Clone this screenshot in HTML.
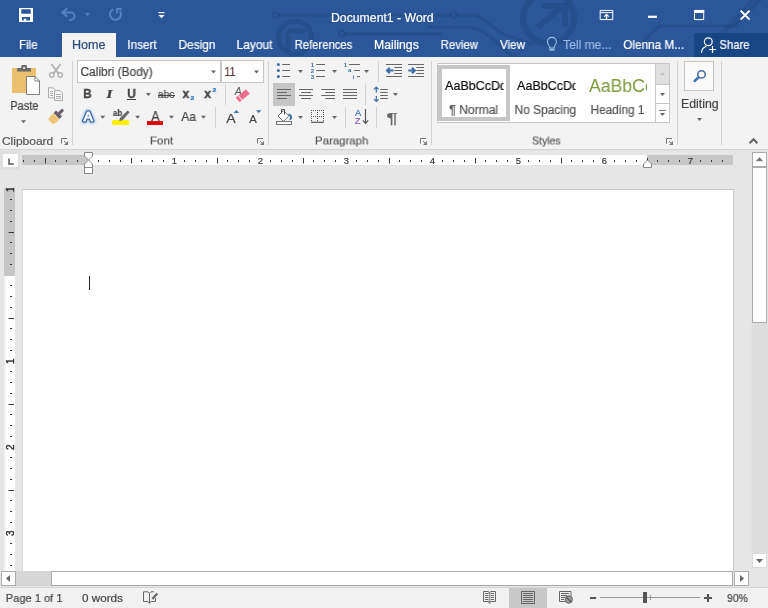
<!DOCTYPE html>
<html lang="en"><head><meta charset="utf-8"><title>Document1 - Word</title>
<style>
html,body{margin:0;padding:0;}
body{width:768px;height:608px;overflow:hidden;position:relative;background:#e6e6e6;font-family:"Liberation Sans",sans-serif;}
.t{position:absolute;white-space:nowrap;transform-origin:0 50%;will-change:transform;line-height:20px;-webkit-text-stroke:0.2px currentColor;}
.r{position:absolute;box-sizing:border-box;}
svg.ov{position:absolute;left:0;top:0;width:768px;height:608px;}
</style></head><body>
<div class="r" style="left:0px;top:0px;width:768px;height:57px;background:#2b579a;"></div>
<svg class="ov" viewBox="0 0 768 608" width="768" height="608"><g fill="none" stroke="#1d427c" stroke-opacity="0.42" stroke-linecap="round"><circle cx="275.5" cy="15.3" r="3" stroke-width="2"/><path d="M279 15.3H450" stroke-width="3"/><circle cx="453.5" cy="15.3" r="3" stroke-width="2"/><path d="M457 15.3H477L503 34L532 44" stroke-width="3"/><circle cx="342" cy="33.8" r="3" stroke-width="2"/><path d="M345.500 33.8H440" stroke-width="3"/><path d="M430 27H468Q482 28 496 42L512 56" stroke-width="3"/><circle cx="295" cy="37.5" r="16.500" stroke-width="5"/><path d="M288 50V34Q288 31 291 31H304" stroke-width="4.500"/><circle cx="548.5" cy="18" r="25.5" stroke-width="6.5"/><path d="M538 27L563 6M542 6H565V27" stroke-width="6" stroke-linecap="butt"/><path d="M640 45L659 26H735L762 -2" stroke-width="3"/><path d="M700 57L756 -2" stroke-width="6" stroke-opacity="0.3"/></g></svg>
<div class="r" style="left:0px;top:57px;width:768px;height:93px;background:#f3f3f3;border-bottom:1px solid #d2d2d2;"></div>
<div class="r" style="left:62px;top:33px;width:54px;height:25px;background:#f3f3f3;"></div>
<div class="r" style="left:694px;top:33px;width:74px;height:24px;background:#184684;"></div>
<span class="t" style="left:331px;top:7px;font-size:12.2px;color:#fff;padding-left:0.02px;transform:translateY(0.50px) scaleX(1.0053);">Document1 - Word</span>
<span class="t" style="left:18px;top:35px;font-size:12.2px;color:#fff;padding-left:0.89px;transform:scaleX(0.9627);">File</span>
<span class="t" style="left:71px;top:35px;font-size:12.2px;color:#2b4a7f;padding-left:0.96px;transform:scaleX(1.0306);">Home</span>
<span class="t" style="left:127px;top:35px;font-size:12.2px;color:#fff;padding-left:0.25px;transform:scaleX(0.9659);">Insert</span>
<span class="t" style="left:178px;top:35px;font-size:12.2px;color:#fff;padding-left:0.57px;transform:scaleX(0.9715);">Design</span>
<span class="t" style="left:236px;top:35px;font-size:12.2px;color:#fff;padding-left:0.55px;transform:scaleX(0.9825);">Layout</span>
<span class="t" style="left:294px;top:35px;font-size:12.2px;color:#fff;padding-left:0.64px;transform:scaleX(0.9262);">References</span>
<span class="t" style="left:374px;top:35px;font-size:12.2px;color:#fff;padding-left:0.02px;">Mailings</span>
<span class="t" style="left:440px;top:35px;font-size:12.2px;color:#fff;padding-left:0.85px;transform:scaleX(0.9298);">Review</span>
<span class="t" style="left:500px;top:35px;font-size:12.2px;color:#fff;transform:scaleX(0.9531);">View</span>
<span class="t" style="left:563px;top:35px;font-size:12.2px;color:#9bb8e6;padding-left:0.06px;transform:scaleX(0.9912);">Tell me...</span>
<span class="t" style="left:623px;top:35px;font-size:12.2px;color:#fff;padding-left:0.28px;transform:scaleX(0.9637);">Olenna M...</span>
<span class="t" style="left:719px;top:35px;font-size:12.2px;color:#fff;padding-left:0.54px;transform:scaleX(0.9213);">Share</span>
<span class="t" style="left:1px;top:130px;font-size:11.5px;color:#555;padding-left:0.86px;transform:translateY(0.50px) scaleX(1.0426);">Clipboard</span>
<span class="t" style="left:150px;top:130px;font-size:11.5px;color:#555;padding-left:0.08px;transform:translateY(0.50px) scaleX(0.9964);">Font</span>
<span class="t" style="left:315px;top:130px;font-size:11.5px;color:#555;padding-left:0.09px;transform:translateY(0.50px) scaleX(0.9905);">Paragraph</span>
<span class="t" style="left:532px;top:130px;font-size:11.5px;color:#555;padding-left:0.03px;transform:translateY(0.50px) scaleX(0.9139);">Styles</span>
<span class="t" style="left:10px;top:96px;font-size:12.3px;color:#444444;padding-left:0.13px;transform:scaleX(0.9015);">Paste</span>
<span class="t" style="left:681px;top:94px;font-size:12.3px;color:#444444;padding-left:0.02px;transform:scaleX(0.9929);">Editing</span>
<div class="r" style="left:72px;top:61px;width:1px;height:84px;background:#d2d2d2;"></div>
<div class="r" style="left:268px;top:61px;width:1px;height:84px;background:#d2d2d2;"></div>
<div class="r" style="left:431px;top:61px;width:1px;height:84px;background:#d2d2d2;"></div>
<div class="r" style="left:677px;top:61px;width:1px;height:84px;background:#d2d2d2;"></div>
<div class="r" style="left:721px;top:61px;width:1px;height:84px;background:#d2d2d2;"></div>
<div class="r" style="left:225px;top:84px;width:1px;height:21px;background:#d2d2d2;"></div>
<div class="r" style="left:215px;top:107px;width:1px;height:21px;background:#d2d2d2;"></div>
<div class="r" style="left:378px;top:61px;width:1px;height:21px;background:#d2d2d2;"></div>
<div class="r" style="left:365px;top:84px;width:1px;height:21px;background:#d2d2d2;"></div>
<div class="r" style="left:345px;top:107px;width:1px;height:21px;background:#d2d2d2;"></div>
<div class="r" style="left:376px;top:107px;width:1px;height:21px;background:#d2d2d2;"></div>
<div class="r" style="left:77px;top:60px;width:144px;height:23px;background:#fff;border:1px solid #c6c6c6;"></div>
<div class="r" style="left:221px;top:60px;width:43px;height:23px;background:#fff;border:1px solid #c6c6c6;"></div>
<span class="t" style="left:80px;top:62px;font-size:12px;color:#444444;padding-left:0.41px;transform:scaleX(0.9944);">Calibri (Body)</span>
<span class="t" style="left:224px;top:62px;font-size:12px;color:#5a3a3a;padding-left:0.20px;transform:scaleX(0.9107);">11</span>
<span class="t" style="left:83px;top:84px;font-size:12.2px;color:#444444;padding-left:0.16px;transform:scaleX(0.9463);font-weight:bold;-webkit-text-stroke:0.35px currentColor;">B</span>
<span class="t" style="left:106px;top:84px;font-size:13px;color:#444444;padding-left:0.13px;transform:scaleX(1.2522);font-weight:bold;font-style:italic;font-family:'Liberation Serif',serif;">I</span>
<span class="t" style="left:127px;top:84px;font-size:12.2px;color:#444444;padding-left:0.19px;transform:scaleX(0.9755);font-weight:bold;-webkit-text-stroke:0.35px currentColor;">U</span>
<div class="r" style="left:127px;top:99px;width:9px;height:1px;background:#444444;"></div>
<span class="t" style="left:157px;top:84px;font-size:11px;color:#444444;padding-left:0.83px;transform:scaleX(0.9415);">abc</span>
<div class="r" style="left:157.5px;top:94.7px;width:17.2px;height:1px;background:#444444;"></div>
<span class="t" style="left:182px;top:84px;font-size:13px;color:#444444;padding-left:0.47px;transform:scaleX(0.9315);font-weight:bold;-webkit-text-stroke:0.4px currentColor;">x</span>
<span class="t" style="left:190px;top:88px;font-size:5.5px;color:#2e75b6;padding-left:0.47px;transform:scaleX(1.2616);font-weight:bold;">2</span>
<span class="t" style="left:204px;top:84px;font-size:13px;color:#444444;padding-left:0.36px;transform:scaleX(0.9315);font-weight:bold;-webkit-text-stroke:0.4px currentColor;">x</span>
<span class="t" style="left:212px;top:80px;font-size:5.5px;color:#2e75b6;padding-left:0.47px;transform:scaleX(1.2616);font-weight:bold;">2</span>
<span class="t" style="left:112px;top:103px;font-size:9.4px;color:#444444;padding-left:0.94px;transform:scaleX(0.8511);font-weight:bold;">ab</span>
<div class="r" style="left:112.3px;top:120.3px;width:17px;height:5px;background:#fff000;border-radius:1.5px;"></div>
<span class="t" style="left:151px;top:106px;font-size:14px;color:#444444;padding-left:0.22px;transform:scaleX(0.9023);">A</span>
<div class="r" style="left:147px;top:121.2px;width:16px;height:3.8px;background:#e5000f;"></div>
<span class="t" style="left:181px;top:107px;font-size:12.4px;color:#444444;padding-left:0.31px;transform:scaleX(0.9677);">Aa</span>
<span class="t" style="left:226px;top:108px;font-size:13.4px;color:#444444;padding-left:0.28px;transform:translateY(0.80px) scaleX(1.0549);">A</span>
<span class="t" style="left:249px;top:108px;font-size:10.7px;color:#444444;padding-left:0.19px;transform:translateY(0.80px) scaleX(1.0540);">A</span>
<div class="r" style="left:273px;top:83px;width:22px;height:23px;background:#c6c6c6;"></div>
<span class="t" style="left:386px;top:107px;font-size:15.5px;color:#666;padding-left:0.17px;transform:translateY(0.80px) scaleX(1.4025);">¶</span>
<span class="t" style="left:355px;top:102px;font-size:9.3px;color:#3b6fb8;transform:translateY(0.80px);">A</span>
<span class="t" style="left:354px;top:110px;font-size:8.4px;color:#8e5cb8;padding-left:0.64px;transform:translateY(0.80px) scaleX(1.1255);">Z</span>
<div class="r" style="left:437px;top:63px;width:233px;height:60px;background:#fff;border:1px solid #c6c6c6;"></div>
<div class="r" style="left:438px;top:65px;width:72px;height:56px;background:#fff;border:4px solid #c6c6c6;"></div>
<div class="r" style="left:655px;top:64px;width:14px;height:20px;background:#e0e0e0;"></div>
<div class="r" style="left:655px;top:84px;width:15px;height:1px;background:#c6c6c6;"></div>
<div class="r" style="left:655px;top:103px;width:15px;height:1px;background:#c6c6c6;"></div>
<div class="r" style="left:655px;top:64px;width:1px;height:58px;background:#c6c6c6;"></div>
<span class="t" style="left:445px;top:76px;font-size:12.6px;color:#0a0a0a;transform:scaleX(0.9937);clip-path:inset(-5px 3.76px -5px -5px);">AaBbCcDd</span>
<span class="t" style="left:517px;top:76px;font-size:12.6px;color:#0a0a0a;transform:scaleX(0.9937);clip-path:inset(-5px 3.76px -5px -5px);">AaBbCcDd</span>
<span class="t" style="left:589px;top:76px;font-size:18px;color:#7c9a3c;transform:scaleX(0.9798);clip-path:inset(-5px 7.04px -5px -5px);-webkit-text-stroke:0;">AaBbCc</span>
<span class="t" style="left:449px;top:100px;font-size:12.3px;color:#555;padding-left:0.18px;transform:scaleX(0.9884);">¶ Normal</span>
<span class="t" style="left:514px;top:100px;font-size:12.3px;color:#555;padding-left:0.56px;transform:scaleX(0.9698);">No Spacing</span>
<span class="t" style="left:590px;top:100px;font-size:12.3px;color:#555;padding-left:0.57px;transform:scaleX(0.9624);">Heading 1</span>
<div class="r" style="left:684px;top:61px;width:30px;height:30px;background:#fafafa;border:1px solid #c6c6c6;"></div>
<div class="r" style="left:0px;top:151px;width:20px;height:19px;background:#dfdfdf;border-radius:0 2px 2px 0;"></div>
<div class="r" style="left:3px;top:154px;width:14.5px;height:13px;background:#fff;"></div>
<div class="r" style="left:22px;top:155px;width:711px;height:10px;background:#c6c6c6;"></div>
<div class="r" style="left:88px;top:155px;width:559px;height:10px;background:#fff;"></div>
<div class="r" style="left:4px;top:188px;width:11px;height:383px;background:#fff;background:linear-gradient(90deg,#ededed 0,#fff 3px);"></div>
<div class="r" style="left:4px;top:188px;width:11px;height:88px;background:#c6c6c6;"></div>
<div class="r" style="left:22px;top:189px;width:712px;height:382px;background:#fff;border:1px solid #c6c6c6;border-bottom:none;border-left-color:#d6d6d6;"></div>
<div class="r" style="left:89px;top:276px;width:1px;height:14px;background:#222;"></div>
<div class="r" style="left:750px;top:323px;width:18px;height:230px;background:#dddddd;background:linear-gradient(90deg,#e6e6e6 0,#dddddd 3px);"></div>
<div class="r" style="left:752px;top:152px;width:15px;height:15px;background:#fff;border:1px solid #ababab;"></div>
<div class="r" style="left:752px;top:167px;width:15px;height:156px;background:#fff;border:1px solid #ababab;"></div>
<div class="r" style="left:752px;top:553px;width:15px;height:15px;background:#fff;border:1px solid #dadada;"></div>
<div class="r" style="left:0px;top:571px;width:750px;height:15px;background:#e6e6e6;"></div>
<div class="r" style="left:16px;top:571px;width:35px;height:15px;background:#d6d6d6;"></div>
<div class="r" style="left:1px;top:571px;width:15px;height:15px;background:#fff;border:1px solid #ababab;"></div>
<div class="r" style="left:51px;top:571px;width:682px;height:15px;background:#fff;border:1px solid #ababab;"></div>
<div class="r" style="left:734px;top:571px;width:15px;height:15px;background:#fff;border:1px solid #ababab;"></div>
<div class="r" style="left:0px;top:587px;width:768px;height:21px;background:#f1f1f1;border-top:1px solid #d4d4d4;"></div>
<div class="r" style="left:509px;top:588px;width:38px;height:20px;background:#c8c8c8;"></div>
<span class="t" style="left:5px;top:588px;font-size:11.5px;color:#444444;padding-left:0.84px;transform:scaleX(0.9637);">Page 1 of 1</span>
<span class="t" style="left:82px;top:588px;font-size:11.5px;color:#444444;padding-left:0.09px;transform:scaleX(1.0141);">0 words</span>
<span class="t" style="left:727px;top:588px;font-size:11.5px;color:#444444;padding-left:0.03px;transform:scaleX(0.9058);">90%</span>
<svg class="ov" viewBox="0 0 768 608" width="768" height="608">
<path d="M211.00 70.50h5l-2.50 3.00z" fill="#666"/>
<path d="M254.00 70.50h5l-2.50 3.00z" fill="#666"/>
<path d="M145.90 93.00h5l-2.50 3.00z" fill="#666"/>
<path d="M100.20 115.80h5l-2.50 3.00z" fill="#666"/>
<path d="M135.10 115.80h5l-2.50 3.00z" fill="#666"/>
<path d="M169.00 115.80h5l-2.50 3.00z" fill="#666"/>
<path d="M201.00 115.80h5l-2.50 3.00z" fill="#666"/>
<rect x="23" y="160" width="1" height="2" fill="#3a3a3a"/>
<rect x="34" y="160" width="1" height="2" fill="#3a3a3a"/>
<rect x="45" y="158" width="1" height="5.5" fill="#3a3a3a"/>
<rect x="55" y="160" width="1" height="2" fill="#3a3a3a"/>
<rect x="66" y="160" width="1" height="2" fill="#3a3a3a"/>
<rect x="77" y="160" width="1" height="2" fill="#3a3a3a"/>
<rect x="98" y="160" width="1" height="2" fill="#3a3a3a"/>
<rect x="109" y="160" width="1" height="2" fill="#3a3a3a"/>
<rect x="120" y="160" width="1" height="2" fill="#3a3a3a"/>
<rect x="131" y="158" width="1" height="5.5" fill="#3a3a3a"/>
<rect x="141" y="160" width="1" height="2" fill="#3a3a3a"/>
<rect x="152" y="160" width="1" height="2" fill="#3a3a3a"/>
<rect x="163" y="160" width="1" height="2" fill="#3a3a3a"/>
<rect x="184" y="160" width="1" height="2" fill="#3a3a3a"/>
<rect x="195" y="160" width="1" height="2" fill="#3a3a3a"/>
<rect x="206" y="160" width="1" height="2" fill="#3a3a3a"/>
<rect x="217" y="158" width="1" height="5.5" fill="#3a3a3a"/>
<rect x="227" y="160" width="1" height="2" fill="#3a3a3a"/>
<rect x="238" y="160" width="1" height="2" fill="#3a3a3a"/>
<rect x="249" y="160" width="1" height="2" fill="#3a3a3a"/>
<rect x="270" y="160" width="1" height="2" fill="#3a3a3a"/>
<rect x="281" y="160" width="1" height="2" fill="#3a3a3a"/>
<rect x="292" y="160" width="1" height="2" fill="#3a3a3a"/>
<rect x="303" y="158" width="1" height="5.5" fill="#3a3a3a"/>
<rect x="313" y="160" width="1" height="2" fill="#3a3a3a"/>
<rect x="324" y="160" width="1" height="2" fill="#3a3a3a"/>
<rect x="335" y="160" width="1" height="2" fill="#3a3a3a"/>
<rect x="356" y="160" width="1" height="2" fill="#3a3a3a"/>
<rect x="367" y="160" width="1" height="2" fill="#3a3a3a"/>
<rect x="378" y="160" width="1" height="2" fill="#3a3a3a"/>
<rect x="389" y="158" width="1" height="5.5" fill="#3a3a3a"/>
<rect x="399" y="160" width="1" height="2" fill="#3a3a3a"/>
<rect x="410" y="160" width="1" height="2" fill="#3a3a3a"/>
<rect x="421" y="160" width="1" height="2" fill="#3a3a3a"/>
<rect x="442" y="160" width="1" height="2" fill="#3a3a3a"/>
<rect x="453" y="160" width="1" height="2" fill="#3a3a3a"/>
<rect x="464" y="160" width="1" height="2" fill="#3a3a3a"/>
<rect x="475" y="158" width="1" height="5.5" fill="#3a3a3a"/>
<rect x="485" y="160" width="1" height="2" fill="#3a3a3a"/>
<rect x="496" y="160" width="1" height="2" fill="#3a3a3a"/>
<rect x="507" y="160" width="1" height="2" fill="#3a3a3a"/>
<rect x="528" y="160" width="1" height="2" fill="#3a3a3a"/>
<rect x="539" y="160" width="1" height="2" fill="#3a3a3a"/>
<rect x="550" y="160" width="1" height="2" fill="#3a3a3a"/>
<rect x="561" y="158" width="1" height="5.5" fill="#3a3a3a"/>
<rect x="571" y="160" width="1" height="2" fill="#3a3a3a"/>
<rect x="582" y="160" width="1" height="2" fill="#3a3a3a"/>
<rect x="593" y="160" width="1" height="2" fill="#3a3a3a"/>
<rect x="614" y="160" width="1" height="2" fill="#3a3a3a"/>
<rect x="625" y="160" width="1" height="2" fill="#3a3a3a"/>
<rect x="636" y="160" width="1" height="2" fill="#3a3a3a"/>
<rect x="647" y="158" width="1" height="5.5" fill="#3a3a3a"/>
<rect x="657" y="160" width="1" height="2" fill="#3a3a3a"/>
<rect x="668" y="160" width="1" height="2" fill="#3a3a3a"/>
<rect x="679" y="160" width="1" height="2" fill="#3a3a3a"/>
<rect x="700" y="160" width="1" height="2" fill="#3a3a3a"/>
<rect x="711" y="160" width="1" height="2" fill="#3a3a3a"/>
<rect x="722" y="160" width="1" height="2" fill="#3a3a3a"/>
<text x="174.3" y="163.8" font-size="9.4" fill="#333" stroke="#333" stroke-width="0.15" text-anchor="middle" font-family="Liberation Sans, sans-serif">1</text>
<text x="260.3" y="163.8" font-size="9.4" fill="#333" stroke="#333" stroke-width="0.15" text-anchor="middle" font-family="Liberation Sans, sans-serif">2</text>
<text x="346.3" y="163.8" font-size="9.4" fill="#333" stroke="#333" stroke-width="0.15" text-anchor="middle" font-family="Liberation Sans, sans-serif">3</text>
<text x="432.3" y="163.8" font-size="9.4" fill="#333" stroke="#333" stroke-width="0.15" text-anchor="middle" font-family="Liberation Sans, sans-serif">4</text>
<text x="518.3" y="163.8" font-size="9.4" fill="#333" stroke="#333" stroke-width="0.15" text-anchor="middle" font-family="Liberation Sans, sans-serif">5</text>
<text x="604.3" y="163.8" font-size="9.4" fill="#333" stroke="#333" stroke-width="0.15" text-anchor="middle" font-family="Liberation Sans, sans-serif">6</text>
<text x="690.3" y="163.8" font-size="9.4" fill="#333" stroke="#333" stroke-width="0.15" text-anchor="middle" font-family="Liberation Sans, sans-serif">7</text>
<defs><clipPath id="vr"><rect x="4" y="188" width="11" height="383"/></clipPath></defs><g clip-path="url(#vr)">
<text transform="translate(14,189.2) rotate(-90)" font-size="10" fill="#2a2a2a" stroke="#2a2a2a" stroke-width="0.35" text-anchor="middle" font-family="Liberation Sans, sans-serif">1</text>
<rect x="10" y="199" width="2" height="1" fill="#3a3a3a"/>
<rect x="10" y="210" width="2" height="1" fill="#3a3a3a"/>
<rect x="10" y="221" width="2" height="1" fill="#3a3a3a"/>
<rect x="8.5" y="232" width="5.5" height="1" fill="#3a3a3a"/>
<rect x="10" y="242" width="2" height="1" fill="#3a3a3a"/>
<rect x="10" y="253" width="2" height="1" fill="#3a3a3a"/>
<rect x="10" y="264" width="2" height="1" fill="#3a3a3a"/>
<rect x="10" y="285" width="2" height="1" fill="#3a3a3a"/>
<rect x="10" y="296" width="2" height="1" fill="#3a3a3a"/>
<rect x="10" y="307" width="2" height="1" fill="#3a3a3a"/>
<rect x="8.5" y="318" width="5.5" height="1" fill="#3a3a3a"/>
<rect x="10" y="328" width="2" height="1" fill="#3a3a3a"/>
<rect x="10" y="339" width="2" height="1" fill="#3a3a3a"/>
<rect x="10" y="350" width="2" height="1" fill="#3a3a3a"/>
<text transform="translate(14,361.2) rotate(-90)" font-size="10" fill="#2a2a2a" stroke="#2a2a2a" stroke-width="0.35" text-anchor="middle" font-family="Liberation Sans, sans-serif">1</text>
<rect x="10" y="371" width="2" height="1" fill="#3a3a3a"/>
<rect x="10" y="382" width="2" height="1" fill="#3a3a3a"/>
<rect x="10" y="393" width="2" height="1" fill="#3a3a3a"/>
<rect x="8.5" y="404" width="5.5" height="1" fill="#3a3a3a"/>
<rect x="10" y="414" width="2" height="1" fill="#3a3a3a"/>
<rect x="10" y="425" width="2" height="1" fill="#3a3a3a"/>
<rect x="10" y="436" width="2" height="1" fill="#3a3a3a"/>
<text transform="translate(14,447.2) rotate(-90)" font-size="10" fill="#2a2a2a" stroke="#2a2a2a" stroke-width="0.35" text-anchor="middle" font-family="Liberation Sans, sans-serif">2</text>
<rect x="10" y="457" width="2" height="1" fill="#3a3a3a"/>
<rect x="10" y="468" width="2" height="1" fill="#3a3a3a"/>
<rect x="10" y="479" width="2" height="1" fill="#3a3a3a"/>
<rect x="8.5" y="490" width="5.5" height="1" fill="#3a3a3a"/>
<rect x="10" y="500" width="2" height="1" fill="#3a3a3a"/>
<rect x="10" y="511" width="2" height="1" fill="#3a3a3a"/>
<rect x="10" y="522" width="2" height="1" fill="#3a3a3a"/>
<text transform="translate(14,533.2) rotate(-90)" font-size="10" fill="#2a2a2a" stroke="#2a2a2a" stroke-width="0.35" text-anchor="middle" font-family="Liberation Sans, sans-serif">3</text>
<rect x="10" y="543" width="2" height="1" fill="#3a3a3a"/>
<rect x="10" y="554" width="2" height="1" fill="#3a3a3a"/>
<rect x="10" y="565" width="2" height="1" fill="#3a3a3a"/>
</g>
<path d="M84.5 152.5h8v3.5l-4 4l-4 -4z" fill="#fff" stroke="#8a8a8a"/>
<path d="M84.5 167.5v-3.5l4 -4l4 4v3.5z" fill="#fff" stroke="#8a8a8a"/>
<rect x="84.5" y="167.5" width="8" height="6" fill="#fff" stroke="#8a8a8a"/>
<path d="M643.5 167.5v-3.5l4 -4l4 4v3.5z" fill="#fff" stroke="#8a8a8a"/>
<path d="M9 158.5v5.5h4.8" fill="none" stroke="#5a5a5a" stroke-width="1.5"/>
<path d="M755.800 161.200l3.700 -4.200l3.700 4.200z" fill="#777"/>
<path d="M756 559h7l-3.5 4z" fill="#666"/>
<path d="M10 575v7l-4 -3.5z" fill="#666"/>
<path d="M740 575v7l4 -3.5z" fill="#666"/>
<rect x="600" y="597" width="100" height="1" fill="#999"/>
<rect x="650" y="595" width="1" height="5" fill="#999"/>
<rect x="643" y="592" width="4" height="11" fill="#555"/>
<rect x="704" y="597" width="8" height="2" fill="#555"/><rect x="707" y="594" width="2" height="8" fill="#555"/>
<rect x="590" y="597" width="6.200" height="2" fill="#555"/>
<path d="M19 8h14v14h-14z M21.3 9.3v4.5h9.4v-4.5z M22 17v3.6h1.8v-1.8h2.4v1.8h3.8v-3.6z" fill="#fff" fill-rule="evenodd"/>
<path d="M67.300 8.400l-4.700 4.100l4.700 4.100" fill="none" stroke="#5682c2" stroke-width="2.200"/>
<path d="M63.5 12.5h7.300a3.700 3.700 0 0 1 0 7.400h-1.600" fill="none" stroke="#5682c2" stroke-width="2"/>
<path d="M84.8 13h5.2l-2.6 2.9z" fill="#5682c2"/>
<path d="M113.200 9.300a5.500 5.500 0 1 0 6.500 1.500" fill="none" stroke="#5682c2" stroke-width="2"/>
<path d="M116.900 13.400v-4.400h4.800" fill="none" stroke="#5682c2" stroke-width="1.800"/>
<rect x="158.5" y="12" width="6" height="1.2" fill="#fff"/><path d="M158.4 15h6.2l-3.1 3.3z" fill="#fff"/>
<path d="M600.2 10.4h12.6v9.2h-12.6z M600.2 12.6h12.6" fill="none" stroke="#fff" stroke-width="1"/>
<path d="M606.5 19.2v-4.6 M604.3 16.6l2.2 -2.2l2.2 2.2" fill="none" stroke="#fff" stroke-width="1.3"/>
<rect x="648" y="15.7" width="9" height="2.2" fill="#fff"/>
<path d="M694.5 10.4h9.2v9.2h-9.2z" fill="none" stroke="#fff" stroke-width="1"/><rect x="694" y="10" width="10.2" height="3" fill="#fff"/>
<path d="M740.6 10.6l9 9 M749.6 10.6l-9 9" fill="none" stroke="#fff" stroke-width="2"/>
<path d="M549.6 46.5c-1.3 -1.4 -2.2 -2.8 -2.2 -4.6a4.5 4.5 0 0 1 9 0c0 1.8 -0.9 3.2 -2.2 4.6v1.5h-4.6z" fill="none" stroke="#9dbde8" stroke-width="1.1"/>
<rect x="549.3" y="48.8" width="5.2" height="1.8" fill="#9dbde8"/>
<circle cx="708.3" cy="41.8" r="3.9" fill="none" stroke="#fff" stroke-width="1.2"/>
<path d="M701.4 53c0.3 -3.6 2.3 -5.9 5 -6.6" fill="none" stroke="#fff" stroke-width="1.2"/>
<path d="M709 49.5h7 M712.5 46v7" fill="none" stroke="#fff" stroke-width="1.2"/>
<rect x="12" y="68" width="24" height="25" fill="#eac06e"/>
<path d="M17.2 71.6v-3.6h4v-1.6a1.4 1.4 0 0 1 1.4 -1.4h3a1.4 1.4 0 0 1 1.4 1.4v1.6h4v3.6z" fill="#6a6a6a"/>
<circle cx="24.1" cy="68" r="1.1" fill="#f3f3f3"/>
<path d="M26.5 76.5h8.500l4.500 4.500v13.500h-13z" fill="#fff" stroke="#808080" stroke-width="1"/>
<path d="M35 76.5v4.500h4.500" fill="none" stroke="#808080" stroke-width="1"/>
<path d="M21.00 120.20h5l-2.50 3.00z" fill="#666"/>
<path d="M51.5 64l6.7 9.3 M60.5 64l-6.7 9.3" fill="none" stroke="#acacac" stroke-width="1.6"/>
<circle cx="51.8" cy="75" r="2.3" fill="none" stroke="#acacac" stroke-width="1.2"/><circle cx="60.2" cy="75" r="2.3" fill="none" stroke="#acacac" stroke-width="1.2"/>
<path d="M48.5 87.8h4.5l2 2v8h-6.500z" fill="#f8f8f8" stroke="#acacac" stroke-width="1"/>
<path d="M54.5 90.6h5.500l2.500 2.500v7.400h-8z" fill="#f8f8f8" stroke="#acacac" stroke-width="1"/>
<path d="M50 91.500h3 M50 93.500h3 M50 95.500h3 M56 94.500h5 M56 96.500h5 M56 98.300h5" stroke="#acacac" stroke-width="1" fill="none"/>
<g transform="translate(55.600,117) rotate(45)"><rect x="-1.500" y="-10.500" width="3" height="6" fill="#6b6070"/><rect x="-4.200" y="-5" width="8.400" height="3.600" fill="#6b6070"/><path d="M-4.200 -1h8.400v4.500l-0.800 3.500h-6.800l-0.800 -3.500z" fill="#edc575"/></g>
<path d="M61.5 143.5v-5h5.500" fill="none" stroke="#777" stroke-width="1"/>
<path d="M64.0 141.0l3 3" fill="none" stroke="#777" stroke-width="1"/>
<path d="M68.0 141.0v4h-4z" fill="#777"/>
<path d="M257.5 143.5v-5h5.500" fill="none" stroke="#777" stroke-width="1"/>
<path d="M260.0 141.0l3 3" fill="none" stroke="#777" stroke-width="1"/>
<path d="M264.0 141.0v4h-4z" fill="#777"/>
<path d="M420.5 143.5v-5h5.500" fill="none" stroke="#777" stroke-width="1"/>
<path d="M423.0 141.0l3 3" fill="none" stroke="#777" stroke-width="1"/>
<path d="M427.0 141.0v4h-4z" fill="#777"/>
<path d="M666.5 143.5v-5h5.500" fill="none" stroke="#777" stroke-width="1"/>
<path d="M669.0 141.0l3 3" fill="none" stroke="#777" stroke-width="1"/>
<path d="M673.0 141.0v4h-4z" fill="#777"/>
<defs><filter id="glow" x="-50%" y="-50%" width="200%" height="200%"><feGaussianBlur stdDeviation="1.1"/></filter></defs>
<text x="88.1" y="121" font-size="13.4" text-anchor="middle" font-family="Liberation Sans, sans-serif" stroke-linejoin="round" fill="#9cc5f5" stroke="#9cc5f5" stroke-width="5.500" filter="url(#glow)" opacity="0.9">A</text>
<text x="88.1" y="121" font-size="13.4" text-anchor="middle" font-family="Liberation Sans, sans-serif" stroke-linejoin="round" fill="#3f5f93" stroke="#3f5f93" stroke-width="3.500">A</text>
<text x="88.1" y="121" font-size="13.4" text-anchor="middle" font-family="Liberation Sans, sans-serif" stroke-linejoin="round" fill="#eef6ff" stroke="#eef6ff" stroke-width="1.100">A</text>
<path d="M127.6 110.6l2 1.600l-7 8l-3.300 0.800l0.600 -3z" fill="#6a6a6a"/>
<text x="234.8" y="95" font-size="10.500" font-style="italic" fill="#555" font-family="Liberation Sans, sans-serif">A</text>
<g transform="translate(242.6,95.8) rotate(-40)"><rect x="-6.500" y="-3" width="3" height="6" fill="#ec6f90"/><rect x="-2.700" y="-3" width="9.500" height="6" fill="#ec6f90"/></g>
<path d="M233.700 112.900l2.650 -2.800l2.650 2.800z" fill="#3d6ca6"/>
<path d="M256 110.200h5.300l-2.650 2.800z" fill="#3d6ca6"/>
<circle cx="278.400" cy="64.5" r="1.500" fill="#3d6ca6"/>
<rect x="282.2" y="64.0" width="7.800000000000011" height="1" fill="#666"/>
<circle cx="278.400" cy="70.5" r="1.500" fill="#3d6ca6"/>
<rect x="282.2" y="70.0" width="7.800000000000011" height="1" fill="#666"/>
<circle cx="278.400" cy="76.5" r="1.500" fill="#3d6ca6"/>
<rect x="282.2" y="76.0" width="7.800000000000011" height="1" fill="#666"/>
<path d="M298.00 70.00h5l-2.50 3.00z" fill="#666"/>
<text x="310.800" y="66.7" font-size="6" font-weight="bold" fill="#3d6ca6" font-family="Liberation Sans, sans-serif">1</text>
<rect x="316.2" y="64.0" width="8.800000000000011" height="1" fill="#666"/>
<text x="310.800" y="72.7" font-size="6" font-weight="bold" fill="#3d6ca6" font-family="Liberation Sans, sans-serif">2</text>
<rect x="316.2" y="70.0" width="8.800000000000011" height="1" fill="#666"/>
<text x="310.800" y="78.7" font-size="6" font-weight="bold" fill="#3d6ca6" font-family="Liberation Sans, sans-serif">3</text>
<rect x="316.2" y="76.0" width="8.800000000000011" height="1" fill="#666"/>
<path d="M332.00 70.00h5l-2.50 3.00z" fill="#666"/>
<text x="343.800" y="66.700" font-size="6" font-weight="bold" fill="#3d6ca6" font-family="Liberation Sans, sans-serif">1</text>
<text x="348" y="72" font-size="6" font-weight="bold" fill="#3d6ca6" font-family="Liberation Sans, sans-serif">a</text>
<text x="352.600" y="78.600" font-size="6" font-weight="bold" fill="#3d6ca6" font-family="Liberation Sans, sans-serif">i</text>
<rect x="349" y="64.0" width="11" height="1" fill="#666"/>
<rect x="354" y="70.0" width="6" height="1" fill="#666"/>
<rect x="357" y="76.0" width="3" height="1" fill="#666"/>
<path d="M364.00 70.00h5l-2.50 3.00z" fill="#666"/>
<rect x="386" y="64.0" width="16" height="1" fill="#666"/>
<rect x="386" y="76.0" width="16" height="1" fill="#666"/>
<rect x="394.3" y="67.0" width="7.699999999999989" height="1" fill="#666"/>
<rect x="394.3" y="70.0" width="7.699999999999989" height="1" fill="#666"/>
<rect x="394.3" y="73.0" width="7.699999999999989" height="1" fill="#666"/>
<rect x="408" y="64.0" width="16" height="1" fill="#666"/>
<rect x="408" y="76.0" width="16" height="1" fill="#666"/>
<rect x="416.3" y="67.0" width="7.699999999999989" height="1" fill="#666"/>
<rect x="416.3" y="70.0" width="7.699999999999989" height="1" fill="#666"/>
<rect x="416.3" y="73.0" width="7.699999999999989" height="1" fill="#666"/>
<path d="M393.500 70.500h-5.500 M389.800 67.700l-2.800 2.800l2.800 2.800" fill="none" stroke="#3d6ca6" stroke-width="2.100"/>
<path d="M408.300 70.500h5.500 M412 67.700l2.800 2.800l-2.800 2.800" fill="none" stroke="#3d6ca6" stroke-width="2.100"/>
<rect x="277" y="89.0" width="14" height="1" fill="#666"/>
<rect x="299" y="89.0" width="14" height="1" fill="#666"/>
<rect x="321.2" y="89.0" width="13.800000000000011" height="1" fill="#666"/>
<rect x="343" y="89.0" width="14" height="1" fill="#666"/>
<rect x="277" y="92.0" width="10" height="1" fill="#666"/>
<rect x="301.2" y="92.0" width="9.800000000000011" height="1" fill="#666"/>
<rect x="325.3" y="92.0" width="9.699999999999989" height="1" fill="#666"/>
<rect x="343" y="92.0" width="14" height="1" fill="#666"/>
<rect x="277" y="95.0" width="14" height="1" fill="#666"/>
<rect x="299" y="95.0" width="14" height="1" fill="#666"/>
<rect x="321.2" y="95.0" width="13.800000000000011" height="1" fill="#666"/>
<rect x="343" y="95.0" width="14" height="1" fill="#666"/>
<rect x="277" y="98.0" width="10" height="1" fill="#666"/>
<rect x="301.2" y="98.0" width="9.800000000000011" height="1" fill="#666"/>
<rect x="325.3" y="98.0" width="9.699999999999989" height="1" fill="#666"/>
<rect x="343" y="98.0" width="14" height="1" fill="#666"/>
<path d="M376.300 87v5.500 M374 89.300l2.300 -2.300l2.300 2.300 M376.300 96v5.500 M374 99.200l2.300 2.300l2.300 -2.300" fill="none" stroke="#3d6ca6" stroke-width="1.200"/>
<rect x="380.2" y="89.0" width="7.600000000000023" height="1" fill="#666"/>
<rect x="380.2" y="92.0" width="7.600000000000023" height="1" fill="#666"/>
<rect x="380.2" y="95.0" width="7.600000000000023" height="1" fill="#666"/>
<rect x="380.2" y="98.0" width="7.600000000000023" height="1" fill="#666"/>
<path d="M392.90 93.00h5l-2.50 3.00z" fill="#666"/>
<path d="M283.400 110.600l5.400 5.400l-5.400 5.400l-5.400 -5.400z" fill="#fff" stroke="#666" stroke-width="1"/>
<path d="M281.500 113.500v-4h3v5" fill="none" stroke="#555" stroke-width="1"/>
<path d="M287.800 113.400c3 0.200 4.600 2 4.300 4.400c-0.200 1.400 -1.200 2.300 -2.600 2.400l0.400 -3.800z" fill="#3d6ca6"/>
<rect x="276.500" y="121.500" width="15" height="3" fill="#fff" stroke="#777" stroke-width="1"/>
<path d="M298.00 116.00h5l-2.50 3.00z" fill="#666"/>
<rect x="311" y="110.0" width="1" height="1" fill="#555"/>
<rect x="311" y="116.0" width="1" height="1" fill="#555"/>
<rect x="313" y="110.0" width="1" height="1" fill="#555"/>
<rect x="313" y="116.0" width="1" height="1" fill="#555"/>
<rect x="315" y="110.0" width="1" height="1" fill="#555"/>
<rect x="315" y="116.0" width="1" height="1" fill="#555"/>
<rect x="317" y="110.0" width="1" height="1" fill="#555"/>
<rect x="317" y="116.0" width="1" height="1" fill="#555"/>
<rect x="319" y="110.0" width="1" height="1" fill="#555"/>
<rect x="319" y="116.0" width="1" height="1" fill="#555"/>
<rect x="321" y="110.0" width="1" height="1" fill="#555"/>
<rect x="321" y="116.0" width="1" height="1" fill="#555"/>
<rect x="323" y="110.0" width="1" height="1" fill="#555"/>
<rect x="323" y="116.0" width="1" height="1" fill="#555"/>
<rect x="311" y="112.0" width="1" height="1" fill="#555"/>
<rect x="317" y="112.0" width="1" height="1" fill="#555"/>
<rect x="323" y="112.0" width="1" height="1" fill="#555"/>
<rect x="311" y="114.0" width="1" height="1" fill="#555"/>
<rect x="317" y="114.0" width="1" height="1" fill="#555"/>
<rect x="323" y="114.0" width="1" height="1" fill="#555"/>
<rect x="311" y="118.0" width="1" height="1" fill="#555"/>
<rect x="317" y="118.0" width="1" height="1" fill="#555"/>
<rect x="323" y="118.0" width="1" height="1" fill="#555"/>
<rect x="311" y="120.0" width="1" height="1" fill="#555"/>
<rect x="317" y="120.0" width="1" height="1" fill="#555"/>
<rect x="323" y="120.0" width="1" height="1" fill="#555"/>
<rect x="311" y="121.7" width="13" height="1.2" fill="#555"/>
<path d="M332.00 116.00h5l-2.50 3.00z" fill="#666"/>
<path d="M365.500 109v14.300 M362.800 120.400l2.700 2.900l2.700 -2.900" fill="none" stroke="#555" stroke-width="1.200"/>
<path d="M660 75l2.500 -2.600l2.500 2.600z" fill="#bcbcbc"/>
<path d="M660.00 93.00h5l-2.50 3.00z" fill="#666"/>
<rect x="659.2" y="109.9" width="6.599999999999909" height="1" fill="#666"/>
<path d="M660.00 113.00h5l-2.50 3.00z" fill="#666"/>
<circle cx="701.500" cy="74.400" r="3.700" fill="none" stroke="#46689a" stroke-width="1.500"/>
<path d="M698.500 77.400l-3.800 3.500" stroke="#3a6cb0" stroke-width="2.600" fill="none" stroke-linecap="round"/>
<path d="M697.00 118.00h5l-2.50 3.00z" fill="#666"/>
<path d="M749.600 143.200l3.900 -4l3.900 4" fill="none" stroke="#666" stroke-width="2"/>
<path d="M143.500 591.800h4.500l1.500 1.500l1.500 -1.500h3 M155.500 598v3.500h-4.500l-1.500 1.800l-1.500 -1.800h-4.500v-9.700" fill="none" stroke="#666" stroke-width="1"/>
<path d="M149.500 593.300v10" stroke="#666" stroke-width="1" fill="none"/>
<path d="M157.300 593.400l-5 5.600" stroke="#666" stroke-width="2.200" fill="none"/>
<path d="M483.500 591.500h4.500l1.500 1l1.500 -1h4.500v10h-4.500l-1.500 1l-1.500 -1h-4.500z" fill="none" stroke="#666" stroke-width="1"/>
<path d="M489.500 592.500v11" stroke="#666" stroke-width="1.600" fill="none" stroke-dasharray="1.300 0.700"/>
<rect x="485" y="593.0" width="3.3000000000000114" height="1" fill="#666"/>
<rect x="490.7" y="593.0" width="3.3000000000000114" height="1" fill="#666"/>
<rect x="485" y="595.0" width="3.3000000000000114" height="1" fill="#666"/>
<rect x="490.7" y="595.0" width="3.3000000000000114" height="1" fill="#666"/>
<rect x="485" y="597.0" width="3.3000000000000114" height="1" fill="#666"/>
<rect x="490.7" y="597.0" width="3.3000000000000114" height="1" fill="#666"/>
<rect x="485" y="599.0" width="3.3000000000000114" height="1" fill="#666"/>
<rect x="490.7" y="599.0" width="3.3000000000000114" height="1" fill="#666"/>
<rect x="521.500" y="591.500" width="13" height="12" fill="none" stroke="#666" stroke-width="1"/>
<rect x="523" y="593.0" width="10" height="1" fill="#666"/>
<rect x="523" y="595.0" width="10" height="1" fill="#666"/>
<rect x="523" y="597.0" width="10" height="1" fill="#666"/>
<rect x="523" y="599.0" width="10" height="1" fill="#666"/>
<rect x="523" y="601.0" width="10" height="1" fill="#666"/>
<path d="M565 601.500h-5.500v-10h11.500v4.500" fill="none" stroke="#666" stroke-width="1"/>
<rect x="561" y="593.0" width="8" height="1" fill="#666"/>
<rect x="561" y="595.0" width="6" height="1" fill="#666"/>
<rect x="561" y="597.0" width="4" height="1" fill="#666"/>
<rect x="561" y="599.0" width="3" height="1" fill="#666"/>
<circle cx="568.800" cy="599.500" r="3.700" fill="#9a9a9a" stroke="#666" stroke-width="1"/>
<path d="M566.400 597.400l4.600 4.400" fill="none" stroke="#5a5a5a" stroke-width="1.300"/>
</svg>

</body></html>
